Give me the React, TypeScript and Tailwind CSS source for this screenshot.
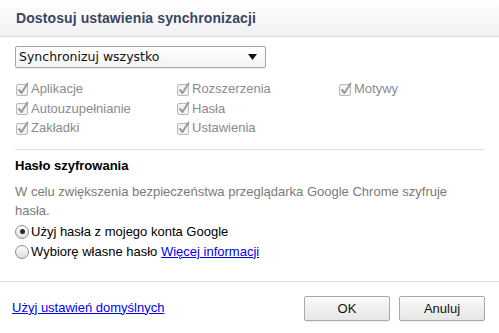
import React from 'react';

const font = { fontFamily: '"Liberation Sans", Arial, sans-serif' };

const CheckMark = () => (
  <svg width="14" height="14" viewBox="0 0 14 14" className="shrink-0">
    <rect x="1.5" y="2.5" width="11" height="11" rx="1.5" fill="#f4f4f4" stroke="#b8b8b8" />
    <path d="M4 8 L6.5 11 L12.5 1.5" fill="none" stroke="#9a9a9a" strokeWidth="2" strokeLinecap="round" strokeLinejoin="round" />
  </svg>
);

const Item = ({ label }: { label: string }) => (
  <div className="flex items-center gap-[2px] h-[19.5px]">
    <CheckMark />
    <span>{label}</span>
  </div>
);

const Radio = ({ on }: { on?: boolean }) => (
  <span className="w-[14px] h-[14px] rounded-full border border-[#8e8e8e] bg-gradient-to-b from-[#fdfdfd] to-[#dedede] flex items-center justify-center shrink-0">
    {on && <span className="w-[5px] h-[5px] rounded-full bg-[#1f2b3e]" />}
  </span>
);

export default function App() {
  return (
    <div className="w-[499px] h-[333px] bg-white flex flex-col text-[13px]" style={font}>
      <div className="h-[37px] shrink-0 px-4 flex items-center bg-gradient-to-b from-white to-[#f1f1f3] border-b border-[#d7d7de]">
        <h1 className="text-[14px] font-bold text-[#3b4563] tracking-[0.1px]">Dostosuj ustawienia synchronizacji</h1>
      </div>

      <div className="px-[15px] pt-[9px] flex-1 flex flex-col">
        <div className="w-[251px] h-[22px] border border-[#a5a5a5] rounded-[2px] bg-gradient-to-b from-white to-[#f3f3f3] flex items-center justify-between pl-[3px] pr-[8px] shadow-[0_1px_1px_rgba(0,0,0,0.08)]">
          <span className="text-[#111]" style={{ fontFamily: '"DejaVu Sans", sans-serif', fontSize: '12.5px' }}>Synchronizuj wszystko</span>
          <svg width="9" height="6" viewBox="0 0 9 6"><path d="M0 0 H9 L4.5 6 Z" fill="#111" /></svg>
        </div>

        <div className="grid grid-cols-[161px_162px_1fr] mt-[11px] text-[#888b92]">
          <Item label="Aplikacje" />
          <Item label="Rozszerzenia" />
          <Item label="Motywy" />
          <Item label="Autouzupełnianie" />
          <Item label="Hasła" />
          <div />
          <Item label="Zakładki" />
          <Item label="Ustawienia" />
        </div>

        <div className="mt-[11px] border-t border-[#dcdcdc] w-[470px]" />

        <div className="mt-[6px] font-bold text-black leading-[19px]">Hasło szyfrowania</div>
        <p className="mt-[7px] text-[#7a7a7a] leading-[19px] w-[440px]">
          W celu zwiększenia bezpieczeństwa przeglądarka Google Chrome szyfruje hasła.
        </p>
        <div className="mt-[2px] flex flex-col text-black">
          <label className="flex items-center gap-[2px] h-[20px]">
            <Radio on />
            <span>Użyj hasła z mojego konta Google</span>
          </label>
          <label className="flex items-center gap-[2px] h-[20px]">
            <Radio />
            <span>
              Wybiorę własne hasło <a className="text-[#0000ee] underline">Więcej informacji</a>
            </span>
          </label>
        </div>
      </div>

      <div className="h-[52px] shrink-0 border-t border-[#dcdce2] flex items-center justify-between pl-[12px] pr-[14px]">
        <a className="text-[#0000ee] underline">Użyj ustawień domyślnych</a>
        <div className="flex gap-[9px] pt-[2px]">
          <button className="w-[86px] h-[25px] border border-[#a9a9a9] rounded-[2px] bg-gradient-to-b from-[#fafafa] to-[#e6e6e6] text-[#111] shadow-[0_1px_1px_rgba(0,0,0,0.06)]">OK</button>
          <button className="w-[86px] h-[25px] border border-[#a9a9a9] rounded-[2px] bg-gradient-to-b from-[#fafafa] to-[#e6e6e6] text-[#111] shadow-[0_1px_1px_rgba(0,0,0,0.06)]">Anuluj</button>
        </div>
      </div>
    </div>
  );
}
